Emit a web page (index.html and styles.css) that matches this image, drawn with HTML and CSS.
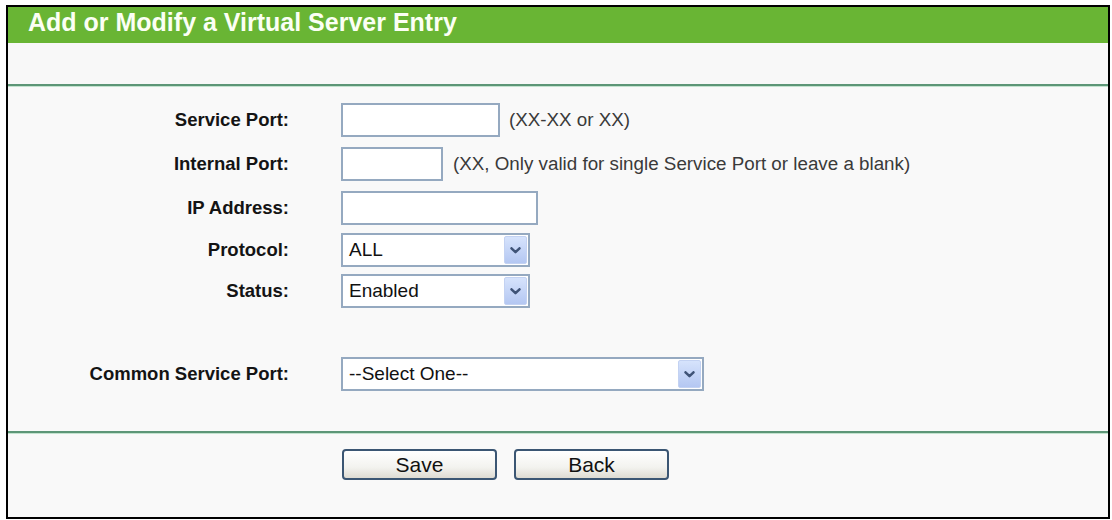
FILE: index.html
```html
<!DOCTYPE html>
<html>
<head>
<meta charset="utf-8">
<title>Add or Modify a Virtual Server Entry</title>
<link rel="stylesheet" href="styles.css">
</head>
<body>
<div class="frame">
  <div class="header">Add or Modify a Virtual Server Entry</div>
  <div class="band"></div>
  <div class="sep"></div>
  <div class="form">
    <div class="row">
      <div class="label">Service Port:</div>
      <input class="field w-service" type="text">
      <span class="hint hint-service">(XX-XX or XX)</span>
    </div>
    <div class="row">
      <div class="label">Internal Port:</div>
      <input class="field w-internal" type="text">
      <span class="hint">(XX, Only valid for single Service Port or leave a blank)</span>
    </div>
    <div class="row">
      <div class="label">IP Address:</div>
      <input class="field w-ip" type="text">
    </div>
    <div class="row r-protocol">
      <div class="label">Protocol:</div>
      <div class="select w-sel">
        <span class="sel-text">ALL</span>
        <span class="sel-btn"><svg width="11" height="7" viewBox="0 0 11 7"><path d="M1.5 1.3 L5.5 5.2 L9.5 1.3" fill="none" stroke="#3f5377" stroke-width="2.5" stroke-linecap="round" stroke-linejoin="round"/></svg></span>
      </div>
    </div>
    <div class="row r-status">
      <div class="label">Status:</div>
      <div class="select w-sel">
        <span class="sel-text">Enabled</span>
        <span class="sel-btn"><svg width="11" height="7" viewBox="0 0 11 7"><path d="M1.5 1.3 L5.5 5.2 L9.5 1.3" fill="none" stroke="#3f5377" stroke-width="2.5" stroke-linecap="round" stroke-linejoin="round"/></svg></span>
      </div>
    </div>
    <div class="row r-common">
      <div class="label">Common Service Port:</div>
      <div class="select w-common">
        <span class="sel-text">--Select One--</span>
        <span class="sel-btn"><svg width="11" height="7" viewBox="0 0 11 7"><path d="M1.5 1.3 L5.5 5.2 L9.5 1.3" fill="none" stroke="#3f5377" stroke-width="2.5" stroke-linecap="round" stroke-linejoin="round"/></svg></span>
      </div>
    </div>
  </div>
  <div class="sep"></div>
  <div class="buttons">
    <button class="btn" type="button">Save</button>
    <button class="btn" type="button">Back</button>
  </div>
</div>
</body>
</html>
```
FILE: styles.css
```css
html, body {
  margin: 0;
  padding: 0;
  background: #ffffff;
}

body {
  font-family: "Liberation Sans", Arial, sans-serif;
  color: #111;
}

.frame {
  margin: 5px 0 0 6px;
  width: 1104px;
  height: 514px;
  box-sizing: border-box;
  border: 2px solid #000;
  background: #f9f9f9;
  display: flex;
  flex-direction: column;
}

.header {
  height: 36px;
  line-height: 31px;
  box-sizing: border-box;
  padding-left: 20px;
  background: #69b534;
  color: #fbfff4;
  font-size: 25px;
  font-weight: bold;
}

.band {
  height: 41px;
  background: #f8f8f8;
}

.sep {
  height: 2px;
  background: #5d9677;
  border-bottom: 1px solid #c3e3cf;
}

.form {
  padding: 16px 0 40px;
}

.row {
  display: flex;
  align-items: center;
  height: 34px;
  margin-top: 10px;
}

.row:first-child {
  margin-top: 0;
}

.row.r-protocol {
  margin-top: 8px;
}

.row.r-status {
  margin-top: 7px;
}

.row.r-common {
  margin-top: 49px;
}

.label {
  width: 281px;
  margin-right: 52px;
  text-align: right;
  font-size: 18.5px;
  font-weight: bold;
  color: #141414;
}

.field {
  height: 34px;
  box-sizing: border-box;
  margin: 0;
  border: 2px solid #95a9c0;
  background: #fff;
  padding: 0 6px;
  font-family: inherit;
  font-size: 18px;
}

.w-service { width: 159px; }
.w-internal { width: 102px; }
.w-ip { width: 197px; }

.hint {
  margin-left: 10px;
  font-size: 18.8px;
  color: #3a3a3a;
}

.hint-service {
  margin-left: 9px;
}

.select {
  display: flex;
  align-items: stretch;
  height: 34px;
  box-sizing: border-box;
  border: 2px solid #95a9c0;
  background: #fff;
  padding: 1px 1px 1px 0;
}

.w-sel { width: 189px; }
.w-common { width: 363px; }

.sel-text {
  flex: 1;
  display: flex;
  align-items: center;
  padding-left: 6px;
  font-size: 19px;
  color: #111;
}

.sel-btn {
  width: 23px;
  display: flex;
  align-items: center;
  justify-content: center;
  box-sizing: border-box;
  border: 1px solid #c3d2f2;
  border-radius: 2px;
  background: linear-gradient(#d6e3fc, #b4c7f2);
}

.buttons {
  flex: 1;
  display: flex;
  align-items: flex-start;
  gap: 17px;
  padding: 15px 0 0 334px;
}

.btn {
  width: 155px;
  height: 31px;
  margin: 0;
  box-sizing: border-box;
  border: 2px solid #3b5673;
  border-radius: 4px;
  background: linear-gradient(#ffffff, #f3f3ef 60%, #dedbd2);
  font-family: inherit;
  font-size: 21px;
  color: #111;
  padding: 0;
  line-height: 27px;
}
```
